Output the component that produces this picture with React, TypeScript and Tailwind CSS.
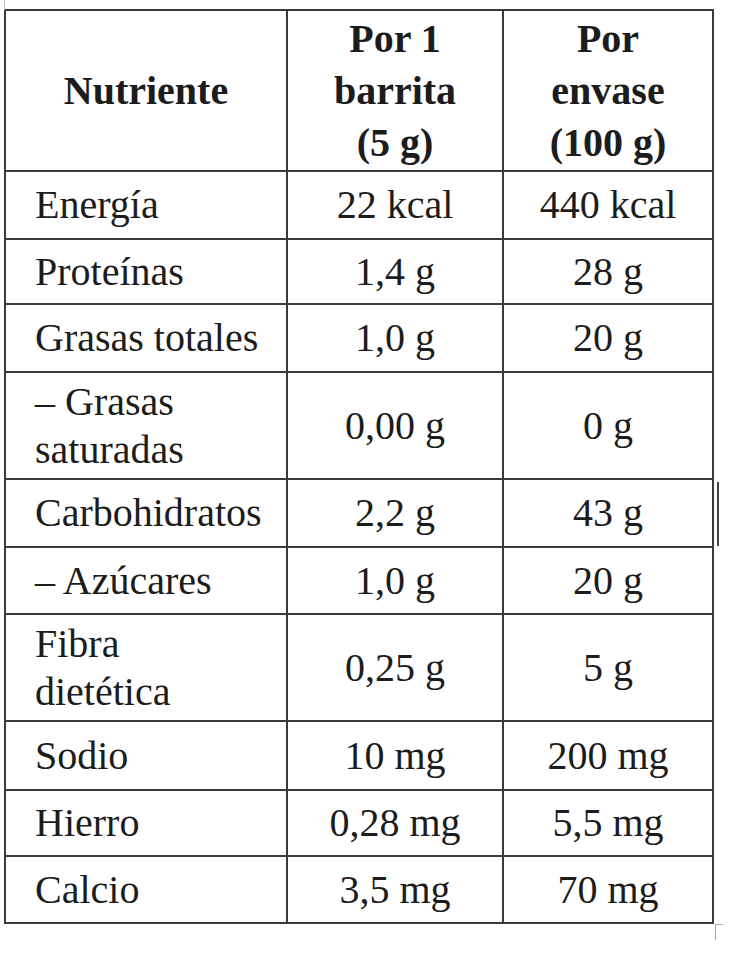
const rows: { name: string[]; a: string; b: string; h: string }[] = [
  { name: ['Energía'], a: '22 kcal', b: '440 kcal', h: 'h-[68px]' },
  { name: ['Proteínas'], a: '1,4 g', b: '28 g', h: 'h-[65px]' },
  { name: ['Grasas totales'], a: '1,0 g', b: '20 g', h: 'h-[68px]' },
  { name: ['– Grasas', 'saturadas'], a: '0,00 g', b: '0 g', h: 'h-[107px]' },
  { name: ['Carbohidratos'], a: '2,2 g', b: '43 g', h: 'h-[68px]' },
  { name: ['– Azúcares'], a: '1,0 g', b: '20 g', h: 'h-[67px]' },
  { name: ['Fibra', 'dietética'], a: '0,25 g', b: '5 g', h: 'h-[107px]' },
  { name: ['Sodio'], a: '10 mg', b: '200 mg', h: 'h-[69px]' },
  { name: ['Hierro'], a: '0,28 mg', b: '5,5 mg', h: 'h-[66px]' },
  { name: ['Calcio'], a: '3,5 mg', b: '70 mg', h: 'h-[67px]' },
];

export default function App() {
  return (
    <div className="relative min-h-[960px] w-[731px] bg-white pl-[4px] pt-[9px] font-['Liberation_Serif','Times_New_Roman',serif] text-[#1c1c1c]">
      {/* scan artifacts */}
      <div className="absolute left-[4px] top-0 h-[10px] w-px bg-[#bbb]" />
      <div className="absolute left-[717px] top-[482px] h-[64px] w-[2px] bg-[#444]" />
      <div className="absolute left-[715px] top-[924px] h-[16px] w-px bg-[#aaa]" />
      <div className="absolute left-[715px] top-[924px] h-px w-[8px] bg-[#aaa]" />

      <table className="w-[708px] table-fixed border-collapse text-[40px] leading-[48px]">
        <colgroup>
          <col className="w-[282px]" />
          <col className="w-[216px]" />
          <col className="w-[210px]" />
        </colgroup>
        <thead>
          <tr className="h-[161px]">
            <th className="border-2 border-[#3a3a3a] text-center align-middle font-bold leading-[52px]">
              Nutriente
            </th>
            <th className="border-2 border-[#3a3a3a] text-center align-middle font-bold leading-[52px]">
              Por 1<br />barrita<br />(5 g)
            </th>
            <th className="border-2 border-[#3a3a3a] text-center align-middle font-bold leading-[52px]">
              Por<br />envase<br />(100 g)
            </th>
          </tr>
        </thead>
        <tbody>
          {rows.map((r) => (
            <tr key={r.name.join(' ')} className={r.h}>
              <td className="border-2 border-[#3a3a3a] pl-[29px] align-middle">
                {r.name.map((n, i) => (
                  <div key={i}>{n}</div>
                ))}
              </td>
              <td className="border-2 border-[#3a3a3a] text-center align-middle">{r.a}</td>
              <td className="border-2 border-[#3a3a3a] text-center align-middle">{r.b}</td>
            </tr>
          ))}
        </tbody>
      </table>
    </div>
  );
}
